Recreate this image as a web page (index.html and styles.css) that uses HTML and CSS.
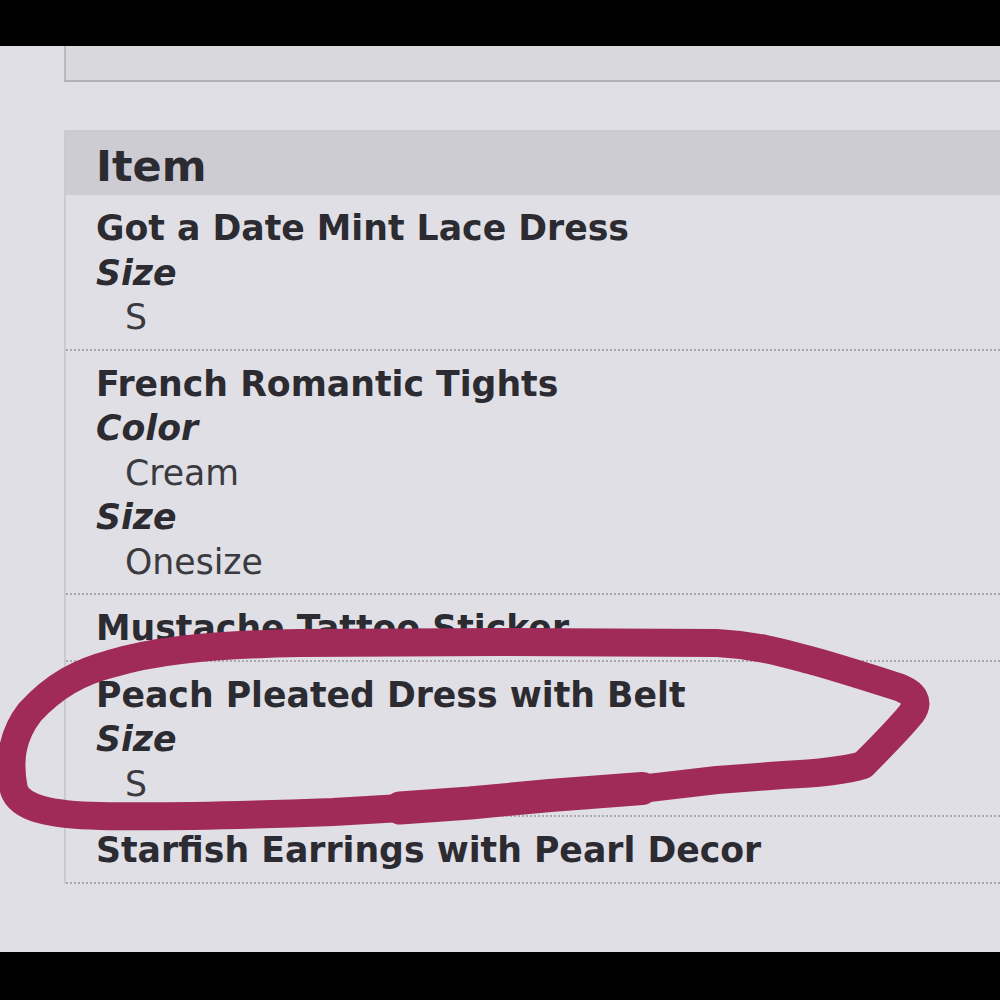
FILE: index.html
```html
<!DOCTYPE html>
<html>
<head>
    <title>Order Items</title>
    <link rel="stylesheet" href="styles.css">
</head>
<body>
    <div class="frame">
        <div class="bar"></div>
        <main class="page">
            <div class="summary-box"></div>

            <table class="items">
                <thead>
                    <tr><th>Item</th></tr>
                </thead>
                <tbody>
                    <tr><td>
                        <div class="item-name">Got a Date Mint Lace Dress</div>
                        <dl class="options">
                            <dt>Size</dt>
                            <dd>S</dd>
                        </dl>
                    </td></tr>
                    <tr><td>
                        <div class="item-name">French Romantic Tights</div>
                        <dl class="options">
                            <dt>Color</dt>
                            <dd>Cream</dd>
                            <dt>Size</dt>
                            <dd>Onesize</dd>
                        </dl>
                    </td></tr>
                    <tr><td>
                        <div class="item-name">Mustache Tattoo Sticker</div>
                    </td></tr>
                    <tr><td>
                        <div class="item-name">Peach Pleated Dress with Belt</div>
                        <dl class="options">
                            <dt>Size</dt>
                            <dd>S</dd>
                        </dl>
                    </td></tr>
                    <tr><td>
                        <div class="item-name">Starfish Earrings with Pearl Decor</div>
                    </td></tr>
                </tbody>
            </table>
        </main>
        <div class="bar bottom"></div>

        <!-- hand drawn circle round the highlighted item -->
        <svg class="markup" width="1000" height="1000" viewBox="0 0 1000 1000">
            <path d="M 300 643 L 500 642 L 717 643
                     C 760 645, 790 655, 817 662
                     C 845 670, 870 678, 895 686
                     C 915 692, 920 702, 911 714
                     C 898 730, 880 748, 863 765
                     C 840 772, 805 774, 783 775
                     L 717 780 L 640 789 L 550 796 L 470 804 L 333 812
                     C 250 815, 150 817, 100 816
                     C 50 815, 20 808, 14 790
                     C 8 760, 12 735, 30 712
                     C 55 685, 80 672, 110 664
                     C 150 652, 200 645, 300 643 Z"/>
            <path class="thick" d="M 400 808 L 470 803 L 550 795.5 L 642 788.5"/>
        </svg>
    </div>
</body>
</html>
```

FILE: styles.css
```css
body {
    margin: 0;
    background: #000;
    font-family: "DejaVu Sans", Verdana, sans-serif;
    color: #2b2b31;
}
.frame {
    position: relative;
    width: 1000px;
    height: 1000px;
    overflow: hidden;
}
.bar {
    height: 46px;
    background: #000;
}
.bar.bottom {
    height: 48px;
}
.page {
    box-sizing: border-box;
    height: 906px;
    padding-left: 64px;
    background: #e0dfe5;
    overflow: hidden;
}
.summary-box {
    height: 34px;
    background: #d9d9dc;
    border-left: 2px solid #b9b8bd;
    border-bottom: 2px solid #b2b1b6;
}
.items {
    width: 100%;
    margin-top: 48px;
    border-collapse: separate;
    border-spacing: 0;
    border-left: 2px solid #cbcacf;
}
.items th {
    text-align: left;
    background: #cdccd2;
    font-size: 43px;
    line-height: 53px;
    font-weight: bold;
    padding: 10px 30px 2px;
}
.items td {
    padding: 11px 30px 9px;
    border-bottom: 2px dotted #a9a8ae;
    font-size: 34.7px;
    line-height: 44.5px;
}
.item-name {
    font-weight: bold;
}
.options {
    margin: 0;
}
.options dt {
    font-weight: bold;
    font-style: italic;
}
.options dd {
    margin: 0 0 0 29px;
    color: #3a3a40;
}
.markup {
    position: absolute;
    left: 0;
    top: 0;
    pointer-events: none;
}
.markup path {
    fill: none;
    stroke: #a12b58;
    stroke-width: 28;
    stroke-linecap: round;
    stroke-linejoin: round;
}
.markup path.thick {
    stroke-width: 33;
}
```
